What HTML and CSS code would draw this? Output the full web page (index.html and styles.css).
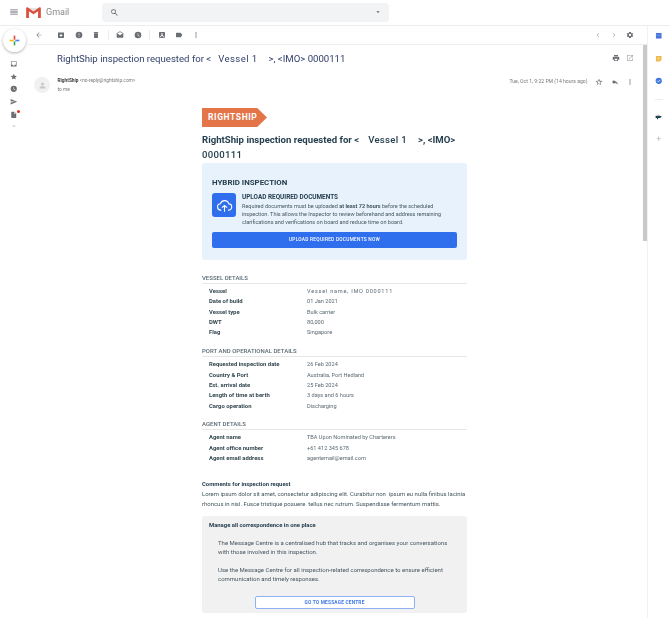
FILE: index.html
```html
<!DOCTYPE html>
<html lang="en">
<head>
  <meta charset="UTF-8">
  <title>Gmail - RightShip inspection</title>
  <link rel="stylesheet" href="styles.css">
</head>
<body>

<!-- Top bar -->
<header class="topbar">
  <svg class="menu" viewBox="0 0 24 24"><path d="M3 18h18v-2H3zm0-5h18v-2H3zm0-7v2h18V6z"/></svg>
  <svg class="logo" viewBox="0 0 16 12">
    <path fill="#e8e4df" d="M1 1h14v11H1z"/>
    <path fill="#fff" d="M3 12V4l5 4 5-4v8z"/>
    <path fill="#d9503f" d="M0 1.5C0 .5 1 0 2 .5L8 5l6-4.5c1-.5 2 0 2 1V12h-3V4.500L8 8 3 4.500V12H0z"/>
  </svg>
  <span class="brand">Gmail</span>
  <div class="search">
    <svg class="search-icon" viewBox="0 0 24 24"><path d="M15.5 14h-.79l-.28-.27A6.47 6.47 0 0 0 16 9.5 6.5 6.5 0 1 0 9.5 16c1.61 0 3.09-.59 4.23-1.57l.27.28v.79l5 4.99L20.49 19l-4.99-5zm-6 0C7.01 14 5 11.99 5 9.5S7.01 5 9.5 5 14 7.01 14 9.5 11.99 14 9.5 14z"/></svg>
    <svg class="search-caret" viewBox="0 0 24 24"><path d="M7 10l5 5 5-5z"/></svg>
  </div>
</header>

<div class="layout">

  <!-- Left rail -->
  <aside class="rail">
    <div class="compose">
      <svg viewBox="0 0 24 24">
        <path fill="#ea4335" d="M10.5 3h3v7.500h-3z"/>
        <path fill="#4285f4" d="M13.5 10.500H21v3h-7.500z"/>
        <path fill="#34a853" d="M10.5 13.500h3V21h-3z"/>
        <path fill="#fbbc05" d="M3 10.500h7.500v3H3z"/>
      </svg>
    </div>
    <svg class="rail-icon" viewBox="0 0 24 24"><path d="M19 3H5a2 2 0 0 0-2 2v14c0 1.100.9 2 2 2h14a2 2 0 0 0 2-2V5a2 2 0 0 0-2-2zm0 12h-4a3 3 0 0 1-6 0H5V5h14z"/></svg>
    <svg class="rail-icon" viewBox="0 0 24 24"><path d="M12 17.300l6.200 3.700-1.600-7L22 9.200l-7.200-.6L12 2 9.200 8.600 2 9.200 7.500 14l-1.700 7z"/></svg>
    <svg class="rail-icon" viewBox="0 0 24 24"><path d="M12 2a10 10 0 1 0 0 20 10 10 0 0 0 0-20zm4 14.500L11 13V7h1.500v5.200l4.500 2.700z"/></svg>
    <svg class="rail-icon" viewBox="0 0 24 24"><path d="M2 21l21-9L2 3v7l15 2-15 2z"/></svg>
    <div class="rail-draft">
      <svg class="rail-icon" viewBox="0 0 24 24"><path d="M14 2H6a2 2 0 0 0-2 2v16c0 1.100.9 2 2 2h12a2 2 0 0 0 2-2V8zm-1 7V3.500L18.500 9z"/></svg>
      <span class="dot"></span>
    </div>
    <svg class="rail-more" viewBox="0 0 24 24"><path d="M7.400 8.600L12 13.200l4.600-4.600L18 10l-6 6-6-6z"/></svg>
  </aside>

  <main class="main">

    <!-- Toolbar -->
    <div class="toolbar">
      <svg class="tool back" viewBox="0 0 24 24"><path d="M20 11H7.800l5.600-5.600L12 4l-8 8 8 8 1.400-1.400L7.800 13H20z"/></svg>
      <div class="tool-group">
        <svg class="tool" viewBox="0 0 24 24"><path d="M20.500 5.200L19.100 3.500A1.500 1.500 0 0 0 18 3H6c-.5 0-.9.2-1.200.5L3.500 5.200C3.200 5.600 3 6 3 6.500V19a2 2 0 0 0 2 2h14a2 2 0 0 0 2-2V6.500c0-.5-.2-.9-.5-1.300zM12 17.500L6.500 12H10v-2h4v2h3.500zM5.100 5l.8-1h12l.9 1z"/></svg>
        <svg class="tool" viewBox="0 0 24 24"><path d="M12 2a10 10 0 1 0 0 20 10 10 0 0 0 0-20zm1 15h-2v-2h2zm0-4h-2V7h2z"/></svg>
        <svg class="tool" viewBox="0 0 24 24"><path d="M6 19a2 2 0 0 0 2 2h8a2 2 0 0 0 2-2V7H6zM19 4h-3.500l-1-1h-5l-1 1H5v2h14z"/></svg>
      </div>
      <div class="tool-group">
        <svg class="tool" viewBox="0 0 24 24"><path d="M22 8c0-.72-.37-1.350-.94-1.700L12 1 2.950 6.300C2.380 6.650 2 7.280 2 8v10c0 1.100.9 2 2 2h16c1.100 0 2-.9 2-2zM12 13L3.740 7.840 12 3l8.260 4.840z"/></svg>
        <svg class="tool" viewBox="0 0 24 24"><path d="M12 2a10 10 0 1 0 0 20 10 10 0 0 0 0-20zm4 14.500L11 13V7h1.500v5.200l4.500 2.700z"/></svg>
      </div>
      <div class="tool-group last">
        <svg class="tool" viewBox="0 0 24 24"><path d="M19 3H5a2 2 0 0 0-2 2v14a2 2 0 0 0 2 2h14a2 2 0 0 0 2-2V5a2 2 0 0 0-2-2zm0 16H5v-3h3.500a3.500 3.500 0 0 0 7 0H19zm-7-2l-4-5h2.500V6h3v6H16z"/></svg>
        <svg class="tool" viewBox="0 0 24 24"><path d="M17.600 5.800A2 2 0 0 0 16 5H5a2 2 0 0 0-2 2v10c0 1.100.9 2 2 2h11c.7 0 1.300-.3 1.600-.8L22 12z"/></svg>
        <svg class="tool" viewBox="0 0 24 24"><path d="M12 8a2 2 0 1 0 0-4 2 2 0 0 0 0 4zm0 2a2 2 0 1 0 0 4 2 2 0 0 0 0-4zm0 6a2 2 0 1 0 0 4 2 2 0 0 0 0-4z"/></svg>
      </div>
      <div class="toolbar-right">
        <svg class="tool light" viewBox="0 0 24 24"><path d="M15.400 7.400L14 6l-6 6 6 6 1.400-1.400L10.800 12z"/></svg>
        <svg class="tool light" viewBox="0 0 24 24"><path d="M10 6L8.600 7.400l4.600 4.600-4.600 4.600L10 18l6-6z"/></svg>
        <svg class="tool" viewBox="0 0 24 24"><path d="M19.400 13a7 7 0 0 0 0-2l2.100-1.600-2-3.500-2.500 1a7.300 7.300 0 0 0-1.700-1L15 3.300h-6l-.4 2.600c-.6.300-1.200.6-1.700 1l-2.400-1-2 3.500L4.600 11a7 7 0 0 0 0 2l-2.100 1.600 2 3.500 2.400-1c.5.400 1.100.7 1.700 1l.4 2.600h6l.4-2.600c.6-.3 1.200-.6 1.700-1l2.400 1 2-3.500zM12 15.500a3.500 3.500 0 1 1 0-7 3.500 3.500 0 0 1 0 7z"/></svg>
      </div>
    </div>

    <div class="thread">
      <div class="subject-row">
        <h1 class="subject">RightShip inspection requested for &lt;<span class="vessel">Vessel 1</span>&gt;, &lt;IMO&gt; <span class="imo">0000111</span></h1>
        <svg class="tool" viewBox="0 0 24 24"><path d="M19 8H5a3 3 0 0 0-3 3v6h4v4h12v-4h4v-6a3 3 0 0 0-3-3zm-3 11H8v-5h8zM18 3H6v4h12z"/></svg>
        <svg class="tool light" viewBox="0 0 24 24"><path d="M19 19H5V5h7V3H5a2 2 0 0 0-2 2v14c0 1.100.9 2 2 2h14a2 2 0 0 0 2-2v-7h-2zM14 3v2h3.600l-9.800 9.800 1.400 1.400L19 6.400V10h2V3z"/></svg>
      </div>

      <div class="sender-row">
        <div class="avatar">
          <svg viewBox="0 0 24 24"><path d="M12 12a4 4 0 1 0 0-8 4 4 0 0 0 0 8zm0 2c-2.700 0-8 1.300-8 4v2h16v-2c0-2.700-5.300-4-8-4z"/></svg>
        </div>
        <div class="sender">
          <div><b>RightShip</b> <span>&lt;no-reply@rightship.com&gt;</span></div>
          <div class="to">to me</div>
        </div>
        <span class="date">Tue, Oct 1, 9:22 PM (14 hours ago)</span>
        <svg class="tool" viewBox="0 0 24 24"><path d="M22 9.200l-7.200-.6L12 2 9.200 8.600 2 9.200 7.500 14l-1.700 7 6.200-3.700 6.200 3.700-1.600-7zm-10 6.200l-3.800 2.300 1-4.300-3.300-2.900 4.400-.4L12 7.100l1.700 4 4.400.4-3.300 2.900 1 4.300z"/></svg>
        <svg class="tool" viewBox="0 0 24 24"><path d="M10 9V5l-7 7 7 7v-4.100c5 0 8.500 1.600 11 5.100-1-5-4-10-11-11z"/></svg>
        <svg class="tool" viewBox="0 0 24 24"><path d="M12 8a2 2 0 1 0 0-4 2 2 0 0 0 0 4zm0 2a2 2 0 1 0 0 4 2 2 0 0 0 0-4zm0 6a2 2 0 1 0 0 4 2 2 0 0 0 0-4z"/></svg>
      </div>

      <!-- Email body -->
      <article class="email">
        <div class="badge">RIGHTSHIP</div>
        <h2 class="email-title">RightShip inspection requested for &lt;<span class="vessel2">Vessel 1</span>&gt;, &lt;IMO&gt; <span class="imo2">0000111</span></h2>

        <section class="hybrid">
          <h3>HYBRID INSPECTION</h3>
          <div class="upload">
            <div class="upload-icon">
              <svg viewBox="0 0 24 24" fill="none" stroke="#fff" stroke-width="1.500" stroke-linecap="round" stroke-linejoin="round"><path d="M7 18.500a4.500 4.500 0 0 1-.6-9A6 6 0 0 1 18 9.700a4.400 4.400 0 0 1-.5 8.800"/><path d="M12 20v-8M8.800 14.800L12 11.800l3.200 3"/></svg>
            </div>
            <div class="upload-text">
              <h4>UPLOAD REQUIRED DOCUMENTS</h4>
              <p>Required documents must be uploaded <b>at least 72 hours</b> before the scheduled inspection. This allows the Inspector to review beforehand and address remaining clarifications and verifications on board and reduce time on board.</p>
            </div>
          </div>
          <div class="btn-primary">UPLOAD REQUIRED DOCUMENTS NOW</div>
        </section>

        <h5 class="details-head first">VESSEL DETAILS</h5>
        <dl class="details">
          <dt>Vessel</dt><dd class="vessel3">Vessel name, IMO 0000111</dd>
          <dt>Date of build</dt><dd>01 Jan 2021</dd>
          <dt>Vessel type</dt><dd>Bulk carrier</dd>
          <dt>DWT</dt><dd>80,000</dd>
          <dt>Flag</dt><dd>Singapore</dd>
        </dl>

        <h5 class="details-head">PORT AND OPERATIONAL DETAILS</h5>
        <dl class="details">
          <dt>Requested inspection date</dt><dd>26 Feb 2024</dd>
          <dt>Country &amp; Port</dt><dd>Australia, Port Hedland</dd>
          <dt>Est. arrival date</dt><dd>25 Feb 2024</dd>
          <dt>Length of time at berth</dt><dd>3 days and 6 hours</dd>
          <dt>Cargo operation</dt><dd>Discharging</dd>
        </dl>

        <h5 class="details-head">AGENT DETAILS</h5>
        <dl class="details">
          <dt>Agent name</dt><dd>TBA Upon Nominated by Charterers</dd>
          <dt>Agent office number</dt><dd>+61 412 345 678</dd>
          <dt>Agent email address</dt><dd>agentemail@email.com</dd>
        </dl>

        <div class="comments">
          <h6>Comments for inspection request</h6>
          <p>Lorem ipsum dolor sit amet, consectetur adipiscing elit. Curabitur non&nbsp; ipsum eu nulla finibus lacinia rhoncus in nisl. Fusce tristique posuere&nbsp; tellus nec rutrum. Suspendisse fermentum mattis.</p>
        </div>

        <section class="manage">
          <h6>Manage all correspondence in one place</h6>
          <p>The Message Centre is a centralised hub that tracks and organises your conversations with those involved in this inspection.</p>
          <p>Use the Message Centre for all inspection-related correspondence to ensure efficient communication and timely responses.</p>
          <div class="btn-outline">GO TO MESSAGE CENTRE</div>
        </section>
      </article>

      <div class="scrollbar"></div>
    </div>
  </main>

  <!-- Right apps panel -->
  <aside class="apps">
    <svg class="app" viewBox="0 0 24 24"><path fill="#4a76dc" d="M3 3h18v18H3z"/><path fill="#7d9fe8" d="M3 9h18v2H3z"/></svg>
    <svg class="app" viewBox="0 0 24 24"><path fill="#eeb84a" d="M3 3h18v12l-6 6H3z"/><path fill="#fff" d="M8 9h8v1.500H8zM8 12h5v1.500H8z"/></svg>
    <svg class="app" viewBox="0 0 24 24"><circle cx="12" cy="12" r="10" fill="#3f78e0"/><path fill="none" stroke="#fff" stroke-width="2.500" d="M7 12l3.500 3.500L17 9"/></svg>
    <i class="app-sep"></i>
    <svg class="app" viewBox="0 0 24 24"><path fill="#21424f" d="M2 9h14l6 3-6 4H2z"/><path fill="#d9503f" d="M11 4l3 4h-3z"/><path fill="#21424f" d="M6 16h4v4H6z"/></svg>
    <svg class="app plus" viewBox="0 0 24 24"><path d="M19 13h-6v6h-2v-6H5v-2h6V5h2v6h6z"/></svg>
  </aside>
</div>

</body>
</html>
```

FILE: styles.css
```css
* { box-sizing: border-box; }
html, body { margin: 0; padding: 0; height: 100%; overflow: hidden; }
body { font-family: Roboto, "Liberation Sans", sans-serif; color: #5f6368; background: #fff; filter: blur(.35px); }
h1, h2, h3, h4, h5, h6, p, dl, dd { margin: 0; }

/* top bar */
.topbar { height: 26px; border-bottom: 1px solid #ececec; display: flex; align-items: center; padding-left: 9px; padding-bottom: 1px; }
.menu { width: 10px; height: 10px; fill: #5f6368; }
.logo { width: 15px; height: 11px; margin-left: 7px; }
.brand { font-size: 9px; color: #8a8a8a; margin-left: 5px; width: 56px; }
.search { width: 287px; height: 19px; background: #f1f3f4; border-radius: 4px; display: flex; align-items: center; padding: 0 7px 0 8px; }
.search-icon { width: 9px; height: 9px; fill: #5f6368; }
.search-caret { width: 8px; height: 8px; fill: #5f6368; margin-left: auto; }

.layout { display: flex; height: 592px; }

/* left rail */
.rail { width: 28px; flex: none; display: flex; flex-direction: column; align-items: center; }
.compose { width: 23px; height: 23px; margin: 3px 0 8px; border-radius: 50%; background: #fff; box-shadow: 0 1px 3px rgba(60,64,67,.4); display: flex; align-items: center; justify-content: center; }
.compose svg { width: 13px; height: 13px; }
.rail-icon { width: 7.5px; height: 7.5px; fill: #6b6f73; display: block; }
.rail > .rail-icon, .rail-draft { margin-bottom: 5.2px; }
.rail-draft { position: relative; }
.dot { position: absolute; top: -1px; right: -2px; width: 3px; height: 3px; border-radius: 50%; background: #d93025; }
.rail-more { width: 6px; height: 6px; fill: #999; }

/* main */
.main { flex: 1; min-width: 0; }
.toolbar { height: 19px; border-bottom: 1px solid #ececec; display: flex; align-items: center; padding-left: 7px; padding-right: 13px; }
.tool { width: 8px; height: 8px; fill: #6b6f73; flex: none; }
.tool.light { fill: #a9acaf; }
.back { margin-right: 14px; fill: #8a8d90; }
.tool-group { display: flex; align-items: center; gap: 9.5px; height: 10px; padding-right: 7.5px; margin-right: 7.5px; border-right: 1px solid #ececec; }
.tool-group.last { border-right: 0; gap: 9px; }
.toolbar-right { margin-left: auto; display: flex; gap: 8px; }

.thread { position: relative; height: 573px; }
.subject-row { display: flex; align-items: center; height: 26px; padding-left: 29px; padding-right: 13px; gap: 6px; }
.subject { flex: 1; font-size: 9.6px; font-weight: 400; color: #33416b; white-space: nowrap; }
.vessel { letter-spacing: .4px; margin: 0 11px 0 7px; }

.sender-row { display: flex; align-items: flex-start; padding: 6px 13px 0 6px; gap: 7.5px; height: 37px; font-size: 4.8px; }
.avatar { width: 16px; height: 16px; border-radius: 50%; background: #f1f1f1; display: flex; align-items: center; justify-content: center; flex: none; }
.avatar svg { width: 9px; height: 9px; fill: #c6c6c6; }
.sender { flex: 1; line-height: 8.5px; color: #777; }
.sender b { color: #3c4043; }
.date { color: #777; margin-top: 1px; font-size: 5.1px; }
.sender-row .tool { margin-top: 1px; }

/* email */
.email { width: 265px; margin-left: 174px; color: #2e4252; }
.badge { width: 65px; height: 19px; margin-bottom: 6px; background: #e37549; color: #fff; font-size: 8.5px; font-weight: 700; letter-spacing: .6px; padding-left: 6px; line-height: 19px; clip-path: polygon(0 0, 85% 0, 100% 50%, 85% 100%, 0 100%); }
.email-title { font-size: 9.6px; line-height: 14.5px; font-weight: 700; color: #27404f; }
.vessel2 { margin: 0 11px 0 9px; letter-spacing: .3px; font-weight: 500; }
.imo2 { letter-spacing: .3px; font-weight: 500; }

.hybrid { background: #e8f2fc; border-radius: 3px; margin-top: 1px; height: 97px; padding: 15px 10px 0; }
.hybrid h3 { font-size: 7.9px; line-height: 10px; font-weight: 700; color: #27404f; margin-bottom: 5px; }
.upload { display: flex; gap: 6px; }
.upload-icon { width: 24px; height: 24px; background: #2f6fed; border-radius: 3px; display: flex; align-items: center; justify-content: center; flex: none; }
.upload-icon svg { width: 17px; height: 17px; }
.upload-text { padding-top: 1px; }
.upload-text h4 { font-size: 6.4px; line-height: 7.5px; font-weight: 700; color: #27404f; }
.upload-text p { font-size: 5.5px; line-height: 8px; color: #44565f; }
.btn-primary { margin-top: 6px; height: 16px; background: #2f6fed; border-radius: 2px; color: #fff; font-size: 4.8px; font-weight: 500; letter-spacing: .25px; display: flex; align-items: center; justify-content: center; }

.details-head { font-size: 6px; line-height: 7px; font-weight: 500; color: #5a6a73; border-bottom: 1px solid #e6e6e6; padding-bottom: 1.5px; margin-top: 9.5px; }
.details-head.first { margin-top: 14px; }
.details { display: grid; grid-template-columns: 98px 1fr; grid-auto-rows: 10.35px; padding: 2.5px 0 0 7px; font-size: 5.9px; line-height: 10.35px; }
.details dt { font-weight: 700; color: #33474f; }
.details dd { color: #5a6a73; white-space: nowrap; font-size: 5.6px; }
.details .vessel3 { letter-spacing: .75px; }

.comments { margin-top: 16px; }
.comments h6 { font-size: 5.9px; line-height: 10px; font-weight: 700; color: #27404f; }
.comments p { font-size: 5.96px; line-height: 9.5px; color: #44565f; }

.manage { margin-top: 8px; background: #f1f1f2; border-radius: 3px; height: 97px; padding: 4px 7px 0; }
.manage h6 { font-size: 5.9px; line-height: 10px; font-weight: 700; color: #27404f; margin-bottom: 8px; }
.manage p { font-size: 6px; line-height: 9px; color: #44565f; padding: 0 9px 0 9px; margin-bottom: 8.5px; }
.btn-outline { width: 160px; height: 13px; margin: 13px auto 0; background: #fff; border: 1px solid #8fb1f3; border-radius: 2px; color: #3f78ea; font-size: 4.8px; font-weight: 700; letter-spacing: .2px; display: flex; align-items: center; justify-content: center; }

.scrollbar { position: absolute; top: 0; right: 0; width: 4px; height: 196px; background: #c9c9c9; }

/* right panel */
.apps { width: 23px; flex: none; border-left: 1px solid #f1f1f1; display: flex; flex-direction: column; align-items: center; padding: 6px 1px 0 0; }
.app { width: 7.5px; height: 7.5px; margin-bottom: 15px; }
.app-sep { width: 8px; height: 1px; background: #ececec; margin: -1px 0 13px; }
.app.plus { fill: #a9acaf; }
```
